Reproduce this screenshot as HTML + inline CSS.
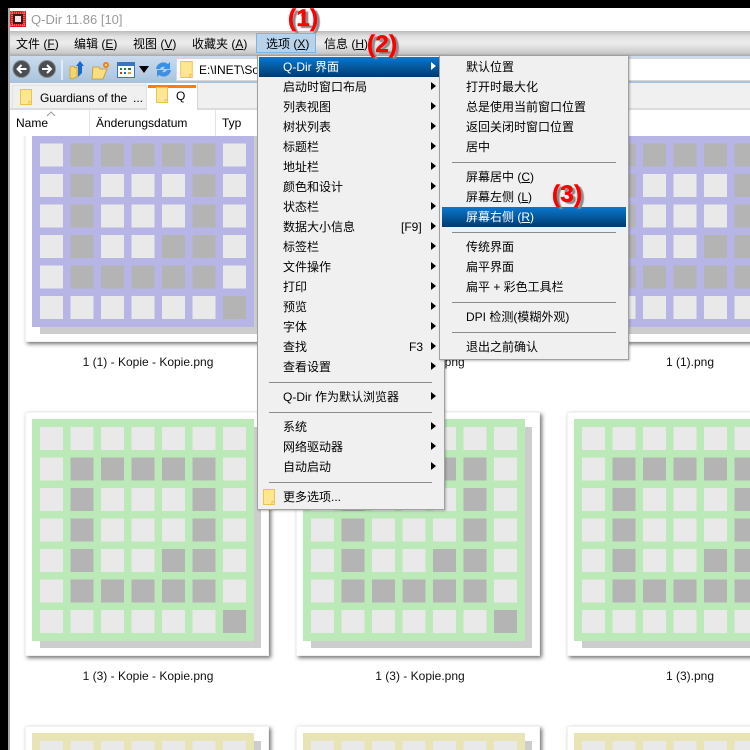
<!DOCTYPE html>
<html><head><meta charset="utf-8">
<style>
html,body{margin:0;padding:0;width:750px;height:750px;overflow:hidden;background:#fff}
body{position:relative;font-family:"Liberation Sans","Noto Sans CJK SC",sans-serif;font-size:12px;color:#000}
.a{position:absolute}
.t{position:absolute;white-space:nowrap;line-height:16px;height:16px}
.clip{position:absolute;left:0;top:0;width:750px;height:750px;overflow:hidden}
.card{position:absolute;width:242px;height:242px;background:#fff;border:1px solid #f2f2f2;box-shadow:2px 2px 4px rgba(0,0,0,.55)}
.card svg{position:absolute;left:-1px;top:-1px}
.lab{position:absolute;width:244px;text-align:center;line-height:16px;white-space:nowrap;color:#111}
.menu{position:absolute;background:#f0f0f0;border:1px solid #a0a0a0;box-sizing:border-box;box-shadow:1px 1px 2px rgba(0,0,0,.25)}
.hl{position:absolute;height:20px;background:linear-gradient(#0a78cf,#003a6e)}
.sep{position:absolute;height:1px;background:#8c8c8c}
.ar{position:absolute;width:0;height:0;border-left:5px solid #000;border-top:4px solid transparent;border-bottom:4px solid transparent}
.w{color:#fff}
.mw .t{margin-top:1px}
.ann{position:absolute;font:bold 24px/26px "Liberation Sans",sans-serif;color:#f00;-webkit-text-stroke:.5px #f00;letter-spacing:.4px;text-shadow:3px 2px 1px #8a8a8a;white-space:nowrap}
u{text-decoration:underline}
</style></head><body>
<svg width="0" height="0" style="position:absolute">
<defs>
<symbol id="cells" viewBox="0 0 244 244">
<g fill="#e9e9e9">
<rect x="15" y="15" width="23" height="23"/><rect x="45.500" y="15" width="23" height="23"/><rect x="76" y="15" width="23" height="23"/><rect x="106.500" y="15" width="23" height="23"/><rect x="137" y="15" width="23" height="23"/><rect x="167.500" y="15" width="23" height="23"/><rect x="198" y="15" width="23" height="23"/>
<rect x="15" y="45.500" width="23" height="23"/><rect x="198" y="45.500" width="23" height="23"/>
<rect x="15" y="76" width="23" height="23"/><rect x="76" y="76" width="23" height="23"/><rect x="106.500" y="76" width="23" height="23"/><rect x="137" y="76" width="23" height="23"/><rect x="198" y="76" width="23" height="23"/>
<rect x="15" y="106.500" width="23" height="23"/><rect x="76" y="106.500" width="23" height="23"/><rect x="106.500" y="106.500" width="23" height="23"/><rect x="137" y="106.500" width="23" height="23"/><rect x="198" y="106.500" width="23" height="23"/>
<rect x="15" y="137" width="23" height="23"/><rect x="76" y="137" width="23" height="23"/><rect x="106.500" y="137" width="23" height="23"/><rect x="198" y="137" width="23" height="23"/>
<rect x="15" y="167.500" width="23" height="23"/><rect x="198" y="167.500" width="23" height="23"/>
<rect x="15" y="198" width="23" height="23"/><rect x="45.500" y="198" width="23" height="23"/><rect x="76" y="198" width="23" height="23"/><rect x="106.500" y="198" width="23" height="23"/><rect x="137" y="198" width="23" height="23"/><rect x="167.500" y="198" width="23" height="23"/>
</g>
<g fill="#b4b4b4">
<rect x="45.500" y="45.500" width="23" height="23"/><rect x="76" y="45.500" width="23" height="23"/><rect x="106.500" y="45.500" width="23" height="23"/><rect x="137" y="45.500" width="23" height="23"/><rect x="167.500" y="45.500" width="23" height="23"/>
<rect x="45.500" y="76" width="23" height="23"/><rect x="167.500" y="76" width="23" height="23"/>
<rect x="45.500" y="106.500" width="23" height="23"/><rect x="167.500" y="106.500" width="23" height="23"/>
<rect x="45.500" y="137" width="23" height="23"/><rect x="137" y="137" width="23" height="23"/><rect x="167.500" y="137" width="23" height="23"/>
<rect x="45.500" y="167.500" width="23" height="23"/><rect x="76" y="167.500" width="23" height="23"/><rect x="106.500" y="167.500" width="23" height="23"/><rect x="137" y="167.500" width="23" height="23"/><rect x="167.500" y="167.500" width="23" height="23"/>
<rect x="198" y="198" width="23" height="23"/>
</g>
</symbol>
<symbol id="thumbP" viewBox="0 0 244 244"><rect x="15" y="15" width="221" height="221" fill="#cdcdcd"/><rect x="7" y="7" width="222" height="222" fill="#b7b5e6"/><use href="#cells" width="244" height="244"/></symbol>
<symbol id="thumbG" viewBox="0 0 244 244"><rect x="15" y="15" width="221" height="221" fill="#cdcdcd"/><rect x="7" y="7" width="222" height="222" fill="#bbe9b8"/><use href="#cells" width="244" height="244"/></symbol>
<symbol id="thumbY" viewBox="0 0 244 244"><rect x="15" y="15" width="221" height="221" fill="#cdcdcd"/><rect x="7" y="7" width="222" height="222" fill="#e9e4b5"/><use href="#cells" width="244" height="244"/></symbol>
<symbol id="folder" viewBox="0 0 12 16"><rect x=".5" y=".5" width="11" height="15" fill="#fde792" stroke="#eec34d"/><path d="M9 15.500v-3h2.500" fill="none" stroke="#eec34d"/></symbol>
</defs>
</svg>

<div class="clip">
<!-- client area cards -->
<div class="card" style="left:25px;top:98px"><svg width="244" height="244"><use href="#thumbP"/></svg></div>
<div class="card" style="left:296px;top:98px"><svg width="244" height="244"><use href="#thumbP"/></svg></div>
<div class="card" style="left:567px;top:98px"><svg width="244" height="244"><use href="#thumbP"/></svg></div>
<div class="lab" style="left:26px;top:354px">1 (1) - Kopie - Kopie.png</div>
<div class="lab" style="left:298px;top:354px">1 (1) - Kopie.png</div>
<div class="lab" style="left:568px;top:354px">1 (1).png</div>

<div class="card" style="left:25px;top:412px"><svg width="244" height="244"><use href="#thumbG"/></svg></div>
<div class="card" style="left:296px;top:412px"><svg width="244" height="244"><use href="#thumbG"/></svg></div>
<div class="card" style="left:567px;top:412px"><svg width="244" height="244"><use href="#thumbG"/></svg></div>
<div class="lab" style="left:26px;top:668px">1 (3) - Kopie - Kopie.png</div>
<div class="lab" style="left:298px;top:668px">1 (3) - Kopie.png</div>
<div class="lab" style="left:568px;top:668px">1 (3).png</div>

<div class="card" style="left:25px;top:726px"><svg width="244" height="244"><use href="#thumbY"/></svg></div>
<div class="card" style="left:296px;top:726px"><svg width="244" height="244"><use href="#thumbY"/></svg></div>
<div class="card" style="left:567px;top:726px"><svg width="244" height="244"><use href="#thumbY"/></svg></div>

<!-- header -->
<div class="a" style="left:0;top:110px;width:750px;height:26px;background:#fff"></div>
<div class="a" style="left:89px;top:110px;width:1px;height:26px;background:#e4e4e4"></div>
<div class="a" style="left:215px;top:110px;width:1px;height:26px;background:#e4e4e4"></div>
<svg class="a" style="left:46px;top:111px" width="10" height="6"><path d="M1 5l4-4 4 4" fill="none" stroke="#9a9a9a"/></svg>
<div class="t" style="left:16px;top:115px">Name</div>
<div class="t" style="left:96px;top:115px">Änderungsdatum</div>
<div class="t" style="left:222px;top:115px">Typ</div>

<!-- tabs -->
<div class="a" style="left:0;top:83px;width:750px;height:25px;background:#f0f0f0"></div>
<div class="a" style="left:0;top:108px;width:750px;height:2px;background:#dcdcdc"></div>
<div class="a" style="left:12px;top:85px;width:135px;height:23px;background:#f0f0f0;border:1px solid #e2e2e2;border-bottom:0;box-sizing:border-box"></div>
<svg class="a" style="left:20px;top:89px" width="12" height="16"><use href="#folder"/></svg>
<div class="t" style="left:40px;top:90px;letter-spacing:-.1px">Guardians of the</div>
<div class="t" style="left:133px;top:90px">...</div>
<div class="a" style="left:147px;top:83px;width:51px;height:27px;background:#fff;border-right:1px solid #d8d8d8;box-sizing:border-box"></div>
<div class="a" style="left:148px;top:85px;width:48px;height:3px;background:#f97f0f"></div>
<svg class="a" style="left:156px;top:87px" width="12" height="16"><use href="#folder"/></svg>
<div class="t" style="left:176px;top:88px">Q</div>

<!-- toolbar -->
<div class="a" style="left:0;top:56px;width:750px;height:27px;background:linear-gradient(#cbdcee,#a9c3dc)"></div>
<div class="a" style="left:176px;top:58px;width:574px;height:23px;background:#fff;border:1px solid #d8d8d8;border-right:0;box-sizing:border-box"></div>
<svg class="a" style="left:12px;top:58px" width="165" height="24" viewBox="0 0 165 24">
<circle cx="9.500" cy="11" r="8.500" fill="#4a4d51"/><circle cx="9.500" cy="11" r="8.500" fill="none" stroke="#8a8d90"/>
<path d="M14.500 11H6M9.500 7l-4 4 4 4" fill="none" stroke="#fff" stroke-width="2"/>
<circle cx="35" cy="11" r="8.500" fill="#4a4d51"/><circle cx="35" cy="11" r="8.500" fill="none" stroke="#8a8d90"/>
<path d="M30 11h8.500M35 7l4 4-4 4" fill="none" stroke="#fff" stroke-width="2"/>
<path d="M50 2v20" stroke="#eef4fa" stroke-width="1.500"/>
<path d="M58 9l4-1 1 2 2-1v10l-5 2-2-1z" fill="#f6d468" stroke="#c89a2e" stroke-width=".7"/>
<path d="M66 19V8h-2l4-5 4 5h-2v7z" fill="#1c68c8"/>
<path d="M81 9h6l1 2h7l-4 10H80z" fill="#f8dd83" stroke="#bf9530" stroke-width=".8"/>
<circle cx="94" cy="7" r="3" fill="#f6731d"/><circle cx="94" cy="7" r="1.300" fill="#ffe36b"/>
<rect x="105.500" y="4.500" width="17" height="15" fill="#fff" stroke="#3a74c0"/><rect x="106" y="5" width="16" height="3" fill="#3a74c0"/>
<path d="M108 10h2v2h-2zM112 10h2v2h-2zM116 10h3v2h-3z" fill="#2a7a3a"/><path d="M108 14h2v2h-2z" fill="#d03030"/><path d="M112 14h2v2h-2z" fill="#3060c0"/><path d="M116 14h3v2h-3z" fill="#d8a020"/>
<path d="M127 8h10l-5 7z" fill="#000"/>
<path d="M144 11a7.500 7.500 0 0 1 12-5l2-2v7h-7l2-2a4 4 0 0 0-5 2z" fill="#3f8fe0"/>
<path d="M159 12a7.500 7.500 0 0 1-12 5l-2 2v-7h7l-2 2a4 4 0 0 0 5-2z" fill="#3f8fe0"/>
</svg>
<svg class="a" style="left:180px;top:61px" width="13" height="17" viewBox="0 0 12 16"><use href="#folder"/></svg>
<div class="t" style="left:199px;top:62px">E:\INET\So</div>

<!-- menu bar -->
<div class="a" style="left:0;top:31px;width:750px;height:25px;background:linear-gradient(#bcbcbc 0,#e2e2e2 22%,#ececec 50%,#cacaca 88%,#a8a8a8 100%)"></div>
<div class="t" style="left:16px;top:36px">文件 (<u>F</u>)</div>
<div class="t" style="left:74px;top:36px">编辑 (<u>E</u>)</div>
<div class="t" style="left:133px;top:36px">视图 (<u>V</u>)</div>
<div class="t" style="left:192px;top:36px">收藏夹 (<u>A</u>)</div>
<div class="a" style="left:256px;top:33px;width:60px;height:20px;background:#b9d2e8;border:1px solid #7fb3e0;box-sizing:border-box"></div>
<div class="t" style="left:266px;top:36px">选项 (<u>X</u>)</div>
<div class="t" style="left:324px;top:36px">信息 (<u>H</u>)</div>

<!-- title bar -->
<div class="a" style="left:0;top:8px;width:750px;height:23px;background:#fff"></div>
<svg class="a" style="left:10px;top:11px" width="16" height="16"><rect width="16" height="16" fill="#e01b1b"/><rect x="3" y="3" width="10" height="10" fill="#3a1a1a"/><rect x="5" y="5" width="6" height="6" fill="#f5e6e6"/><path d="M0 2h16M0 14h16M2 0v16M14 0v16" stroke="#f7a0a0" stroke-dasharray="1 1"/></svg>
<div class="t" style="left:31px;top:12px;color:#9a9a9a;font-size:13px">Q-Dir 11.86 [10]</div>

<!-- window frame -->
<div class="a" style="left:0;top:0;width:750px;height:8px;background:#000"></div>
<div class="a" style="left:0;top:0;width:8px;height:750px;background:#000"></div>
<div class="a" style="left:8px;top:8px;width:2px;height:742px;background:#a8a8a8"></div>

<div class="mw">
<!-- menu 1 -->
<div class="menu" style="left:257px;top:55px;width:188px;height:455px"></div>
<div class="hl" style="left:259px;top:57px;width:180px"></div>
<div class="t w" style="left:283px;top:58px">Q-Dir 界面</div><div class="ar" style="left:431px;top:62px;border-left-color:#fff"></div>
<div class="t" style="left:283px;top:78px">启动时窗口布局</div><div class="ar" style="left:431px;top:82px"></div>
<div class="t" style="left:283px;top:98px">列表视图</div><div class="ar" style="left:431px;top:102px"></div>
<div class="t" style="left:283px;top:118px">树状列表</div><div class="ar" style="left:431px;top:122px"></div>
<div class="t" style="left:283px;top:138px">标题栏</div><div class="ar" style="left:431px;top:142px"></div>
<div class="t" style="left:283px;top:158px">地址栏</div><div class="ar" style="left:431px;top:162px"></div>
<div class="t" style="left:283px;top:178px">颜色和设计</div><div class="ar" style="left:431px;top:182px"></div>
<div class="t" style="left:283px;top:198px">状态栏</div><div class="ar" style="left:431px;top:202px"></div>
<div class="t" style="left:283px;top:218px">数据大小信息</div><div class="t" style="left:401px;top:218px">[F9]</div><div class="ar" style="left:431px;top:222px"></div>
<div class="t" style="left:283px;top:238px">标签栏</div><div class="ar" style="left:431px;top:242px"></div>
<div class="t" style="left:283px;top:258px">文件操作</div><div class="ar" style="left:431px;top:262px"></div>
<div class="t" style="left:283px;top:278px">打印</div><div class="ar" style="left:431px;top:282px"></div>
<div class="t" style="left:283px;top:298px">预览</div><div class="ar" style="left:431px;top:302px"></div>
<div class="t" style="left:283px;top:318px">字体</div><div class="ar" style="left:431px;top:322px"></div>
<div class="t" style="left:283px;top:338px">查找</div><div class="t" style="left:409px;top:338px">F3</div><div class="ar" style="left:431px;top:342px"></div>
<div class="t" style="left:283px;top:358px">查看设置</div><div class="ar" style="left:431px;top:362px"></div>
<div class="sep" style="left:269px;top:382px;width:163px"></div>
<div class="t" style="left:283px;top:388px">Q-Dir 作为默认浏览器</div><div class="ar" style="left:431px;top:392px"></div>
<div class="sep" style="left:269px;top:412px;width:163px"></div>
<div class="t" style="left:283px;top:418px">系统</div><div class="ar" style="left:431px;top:422px"></div>
<div class="t" style="left:283px;top:438px">网络驱动器</div><div class="ar" style="left:431px;top:442px"></div>
<div class="t" style="left:283px;top:458px">自动启动</div><div class="ar" style="left:431px;top:462px"></div>
<div class="sep" style="left:269px;top:482px;width:163px"></div>
<svg class="a" style="left:263px;top:489px" width="12" height="16"><use href="#folder"/></svg>
<div class="t" style="left:283px;top:488px">更多选项...</div>

<!-- menu 2 -->
<div class="menu" style="left:439px;top:55px;width:190px;height:305px"></div>
<div class="t" style="left:466px;top:58px">默认位置</div>
<div class="t" style="left:466px;top:78px">打开时最大化</div>
<div class="t" style="left:466px;top:98px">总是使用当前窗口位置</div>
<div class="t" style="left:466px;top:118px">返回关闭时窗口位置</div>
<div class="t" style="left:466px;top:138px">居中</div>
<div class="sep" style="left:452px;top:162px;width:164px"></div>
<div class="t" style="left:466px;top:168px">屏幕居中 (<u>C</u>)</div>
<div class="t" style="left:466px;top:188px">屏幕左侧 (<u>L</u>)</div>
<div class="hl" style="left:442px;top:207px;width:184px"></div>
<div class="t w" style="left:466px;top:208px">屏幕右侧 (<u>R</u>)</div>
<div class="sep" style="left:452px;top:232px;width:164px"></div>
<div class="t" style="left:466px;top:238px">传统界面</div>
<div class="t" style="left:466px;top:258px">扁平界面</div>
<div class="t" style="left:466px;top:278px">扁平 + 彩色工具栏</div>
<div class="sep" style="left:452px;top:302px;width:164px"></div>
<div class="t" style="left:466px;top:308px">DPI 检测(模糊外观)</div>
<div class="sep" style="left:452px;top:332px;width:164px"></div>
<div class="t" style="left:466px;top:338px">退出之前确认</div>
</div>

<!-- annotations -->
<div class="ann" style="left:288px;top:6px">(1)</div>
<div class="ann" style="left:367px;top:32px">(2)</div>
<div class="ann" style="left:552px;top:182px">(3)</div>
</div>
</body></html>
